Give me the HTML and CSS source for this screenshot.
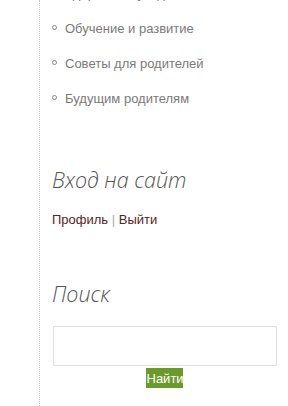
FILE: index.html
```html
<!DOCTYPE html>
<html lang="ru">
<head>
    <meta charset="UTF-8">
    <meta name="viewport" content="width=device-width, initial-scale=1.0">
    <title>Сайдбар</title>
    <link rel="stylesheet" href="styles.css">
</head>
<body>
    <aside class="sidebar">
        <ul class="cat-list">
            <li><a href="#">Здоровье и уход</a></li>
            <li><a href="#">Обучение и развитие</a></li>
            <li><a href="#">Советы для родителей</a></li>
            <li><a href="#">Будущим родителям</a></li>
        </ul>

        <h3 class="widget-title">Вход на сайт</h3>
        <p class="login">
            <a href="#">Профиль</a> <span class="sep">|</span> <a href="#">Выйти</a>
        </p>

        <h3 class="widget-title">Поиск</h3>
        <form class="search-form">
            <input type="text" class="search-input">
            <button type="submit" class="search-btn">Найти</button>
        </form>
    </aside>
</body>
</html>
```

FILE: styles.css
```css
body {
    margin: 0;
    padding: 0;
    background-color: #ffffff;
    font-family: 'Liberation Sans', Arial, sans-serif;
    overflow: hidden;
}
.sidebar {
    display: flow-root;
    margin-left: 39px;
    min-height: 406px;
    border-left: 1px dotted #c8c8c8;
    padding-left: 12px;
    padding-right: 10px;
}
.cat-list {
    list-style: none;
    margin: -24px 0 0 0;
    padding: 0;
}
.cat-list li {
    height: 35px;
    line-height: 35px;
    font-size: 13px;
    display: flex;
    align-items: center;
}
.cat-list li::before {
    content: "";
    width: 3px;
    height: 3px;
    border: 1px solid #888;
    border-radius: 50%;
    margin-right: 8px;
    margin-top: -2px;
}
.cat-list a {
    color: #7a7a7a;
    text-decoration: none;
}
.widget-title {
    font-family: 'Open Sans', sans-serif;
    font-style: italic;
    font-weight: 300;
    font-size: 21.5px;
    line-height: 30px;
    color: #555;
    margin: 49px 0 0 0;
}
.login {
    margin: 15px 0 0 0;
    font-size: 13px;
    line-height: 20px;
}
.login a {
    color: #5a2222;
    text-decoration: none;
}
.login .sep {
    color: #aaa;
}
.search-form {
    margin-top: 17px;
    text-align: center;
}
.search-input {
    display: block;
    box-sizing: border-box;
    width: 224px;
    height: 40px;
    margin: 0 0 2px 1px;
    border: 1px solid #e2e2e2;
    background: #fff;
}
.search-btn {
    font-family: 'Liberation Sans', Arial, sans-serif;
    font-size: 13px;
    color: #fff;
    background-color: #6b9a2c;
    border: none;
    padding: 0 1px;
    height: 20px;
    width: 37px;
    margin-left: -2px;
}
```
